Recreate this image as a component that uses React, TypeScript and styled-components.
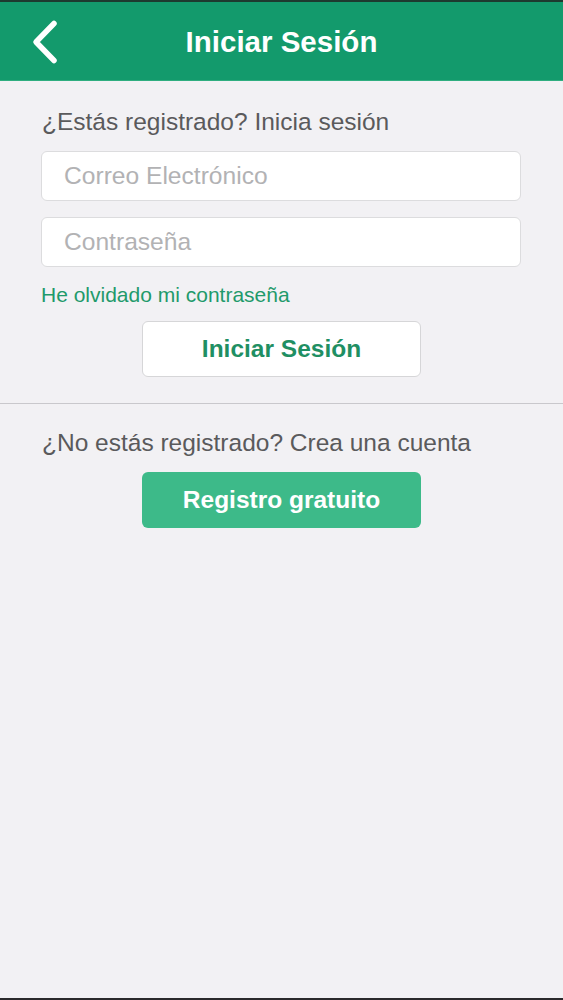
import React from "react";
import styled, { createGlobalStyle } from "styled-components";

const GlobalStyle = createGlobalStyle`
  html, body {
    margin: 0;
    padding: 0;
    background: #f2f1f4;
  }
  * { box-sizing: border-box; }
  body {
    font-family: "Liberation Sans", Arial, Helvetica, sans-serif;
  }
`;

const Page = styled.div`
  min-height: 1000px;
  background: #f2f1f4;
  border-bottom: 2px solid #2a2a2c;
  display: flex;
  flex-direction: column;
`;

const Header = styled.header`
  height: 81px;
  background: #139a6c;
  border-top: 2px solid #1d3a2f;
  border-bottom: 1px solid #2fae80;
  display: grid;
  grid-template-columns: 1fr auto 1fr;
  align-items: center;
`;

const BackButton = styled.button`
  justify-self: start;
  background: none;
  border: none;
  padding: 0;
  margin-left: 29px;
  margin-top: 1px;
  width: 32px;
  height: 46px;
  display: flex;
  align-items: center;
  justify-content: center;
  cursor: pointer;
`;

const Title = styled.h1`
  margin: 2px 0 0 0;
  color: #ffffff;
  font-size: 29.5px;
  font-weight: 700;
  line-height: 1;
`;

const Section = styled.section<{ $top: number; $bottom: number; $divider?: boolean }>`
  padding: ${(p) => p.$top}px 42px ${(p) => p.$bottom}px 41px;
  border-bottom: ${(p) => (p.$divider ? "1px solid #c9c8cc" : "none")};
  display: flex;
  flex-direction: column;
`;

const Prompt = styled.p`
  margin: 0 0 0 1px;
  color: #5a5a5c;
  font-size: 24.5px;
  line-height: 29px;
  white-space: nowrap;
`;

const Input = styled.input<{ $gap: number }>`
  margin-top: ${(p) => p.$gap}px;
  height: 50px;
  width: 100%;
  border: 1px solid #dcdcde;
  border-radius: 6px;
  background: #ffffff;
  padding: 0 22px;
  font-family: "Liberation Sans", Arial, sans-serif;
  font-size: 24.6px;
  color: #333;
  outline: none;
  &::placeholder {
    color: #b2b2b4;
  }
`;

const ForgotLink = styled.a`
  margin-top: 15px;
  align-self: flex-start;
  color: #1f9a6b;
  font-size: 21px;
  line-height: 25px;
  text-decoration: none;
  cursor: pointer;
`;

const Button = styled.button<{ $primary?: boolean; $gap: number }>`
  margin-top: ${(p) => p.$gap}px;
  align-self: center;
  margin-left: 1px;
  width: 279px;
  height: 56px;
  border-radius: 6px;
  border: ${(p) => (p.$primary ? "none" : "1px solid #d6d6d8")};
  background: ${(p) => (p.$primary ? "#3dba89" : "#ffffff")};
  color: ${(p) => (p.$primary ? "#ffffff" : "#1f8f63")};
  font-family: "Liberation Sans", Arial, sans-serif;
  font-size: 24.5px;
  font-weight: 700;
  cursor: pointer;
`;

export default function App() {
  return (
    <>
      <GlobalStyle />
      <Page>
        <Header>
          <BackButton aria-label="Volver">
            <svg width="32" height="46" viewBox="0 0 32 46" fill="none">
              <polyline
                points="25,4.5 7,23 25,41.5"
                stroke="#ffffff"
                strokeWidth="5.5"
                strokeLinecap="round"
                strokeLinejoin="round"
              />
            </svg>
          </BackButton>
          <Title>Iniciar Sesión</Title>
          <span />
        </Header>
        <Section $top={26} $bottom={26} $divider>
          <Prompt>¿Estás registrado? Inicia sesión</Prompt>
          <Input $gap={15} type="email" placeholder="Correo Electrónico" />
          <Input $gap={16} type="password" placeholder="Contraseña" />
          <ForgotLink>He olvidado mi contraseña</ForgotLink>
          <Button $gap={14}>Iniciar Sesión</Button>
        </Section>
        <Section $top={24} $bottom={0}>
          <Prompt>¿No estás registrado? Crea una cuenta</Prompt>
          <Button $primary $gap={15}>Registro gratuito</Button>
        </Section>
      </Page>
    </>
  );
}
